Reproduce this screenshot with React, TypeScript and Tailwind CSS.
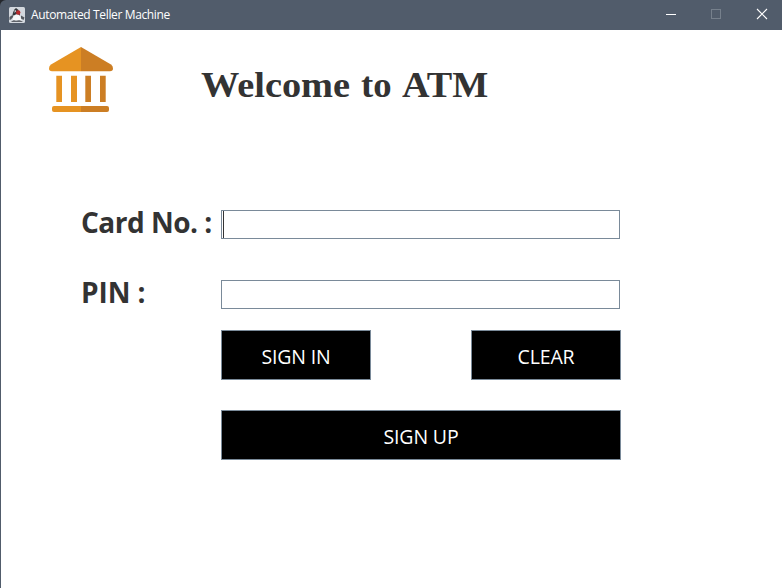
function JavaIcon() {
  return (
    <svg width="16" height="16" viewBox="0 0 16 16" className="shrink-0">
      <rect width="16" height="16" rx="1.5" fill="#d3d8de" />
      <path d="M7 1C5 2.500 4 5 3.500 8l3.500 1.500 4-.5C11 6 10 2.500 7 1Z" fill="#35383d" />
      <path d="M0.500 10 3.500 8l1 1.500L2 12.500 0.500 13ZM12 8.500l3.500 2-1 2.500-2.500-1.500Z" fill="#55595f" />
      <path d="M4.500 9C7 6.500 10 7 11 9l1.500 4.500h-9Z" fill="#f8f9fa" />
      <path d="M2 15c2-2.500 4-2 5-1.200 2-1 5-.8 7 1.200Z" fill="#5e6269" />
      <circle cx="9.200" cy="5.500" r="2.200" fill="#b72a2d" />
      <path d="M5.800 2.800 7.200 4 5.500 6Z" fill="#e5e8eb" />
    </svg>
  );
}

function BankIcon() {
  return (
    <svg width="80" height="80" viewBox="0 0 80 80" className="shrink-0">
      <path d="M41 7 11 24.500Q9 26 9 28.500 9 31.300 12 31.300H41Z" fill="#e69322" />
      <path d="M41 7 71 24.500Q73 26 73 28.500 73 31.300 70 31.300H41Z" fill="#cc7e24" />
      <path d="M16.300 35.700h5.700v26.300h-5.700ZM31 35.700h6v26.300h-6Z" fill="#e69322" />
      <path d="M45.300 35.700h5.700v26.300h-5.700ZM60 35.700h5.700v26.300h-5.700Z" fill="#cc7e24" />
      <path d="M41 66H14q-2 0-2 2v2q0 2 2 2H41Z" fill="#e69322" />
      <path d="M41 66H67q2 0 2 2v2q0 2-2 2H41Z" fill="#cc7e24" />
    </svg>
  );
}

const button =
  "flex h-[50px] items-center justify-center border border-[#7a8a99] bg-black pt-[3px] text-[19.500px] leading-none tracking-[-0.15px] text-white";
const field =
  "h-[29px] w-[399px] border border-[#7a8a99] bg-white px-px text-[16px] outline-none";
const label = "-mt-[2px] w-[140px] whitespace-nowrap text-[28px] leading-none font-bold text-[#333333]";
const word = "origin-left";

export default function App() {
  return (
    <div className="flex h-[588px] w-[782px] flex-col overflow-hidden bg-[#24272c] font-['Open_Sans','Noto_Sans',sans-serif]">
      <header className="flex h-[30px] shrink-0 items-center rounded-tl-md bg-[#515c6b] pl-[9px] text-white">
        <JavaIcon />
        <span className="ml-[6px] text-[12px] leading-none tracking-[-0.36px]">Automated Teller Machine</span>
        <svg width="122" height="30" viewBox="0 0 122 30" className="ml-auto" fill="none">
          <path d="M6 14.500h10" stroke="#fff" />
          <rect x="51.500" y="9.500" width="9" height="9" stroke="#76808c" />
          <path d="m97 9 10 10M107 9 97 19" stroke="#fff" strokeWidth="1.100" />
        </svg>
      </header>
      <main className="flex-1 border-l border-[#515c6b] bg-white">
        <div className="flex h-[180px] items-start pt-[10px] pl-[39px]">
          <BankIcon />
          <h1 className="mt-[27px] ml-[81px] flex font-['Liberation_Serif',serif] text-[36px] leading-none font-bold text-[#333333]">
            <span className={`${word} w-[160px] scale-x-[1.065]`}>Welcome</span>
            <span className={`${word} w-[41px] scale-x-[1.02]`}>to</span>
            <span className={`${word} scale-x-[1.06]`}>ATM</span>
          </h1>
        </div>
        <form className="pl-[80px]" onSubmit={(e) => e.preventDefault()}>
          <div className="flex h-[70px]">
            <label htmlFor="card" className={`${label} tracking-[-0.5px]`}>Card No. :</label>
            <div className="flex h-[29px] w-[399px] border border-[#7a8a99] pl-px">
              <span className="h-full w-px bg-[#333333]" />
              <input id="card" className="min-w-0 flex-1 outline-none" />
            </div>
          </div>
          <div className="flex h-[50px]">
            <label htmlFor="pin" className={`${label} tracking-[-0.1px]`}>PIN :</label>
            <input id="pin" type="password" className={field} />
          </div>
          <div className="ml-[140px] flex w-[400px] flex-wrap justify-between gap-y-[30px]">
            <button type="button" className={`${button} w-[150px]`}>SIGN IN</button>
            <button type="button" className={`${button} w-[150px]`}>CLEAR</button>
            <button type="button" className={`${button} w-full`}>SIGN UP</button>
          </div>
        </form>
      </main>
    </div>
  );
}
